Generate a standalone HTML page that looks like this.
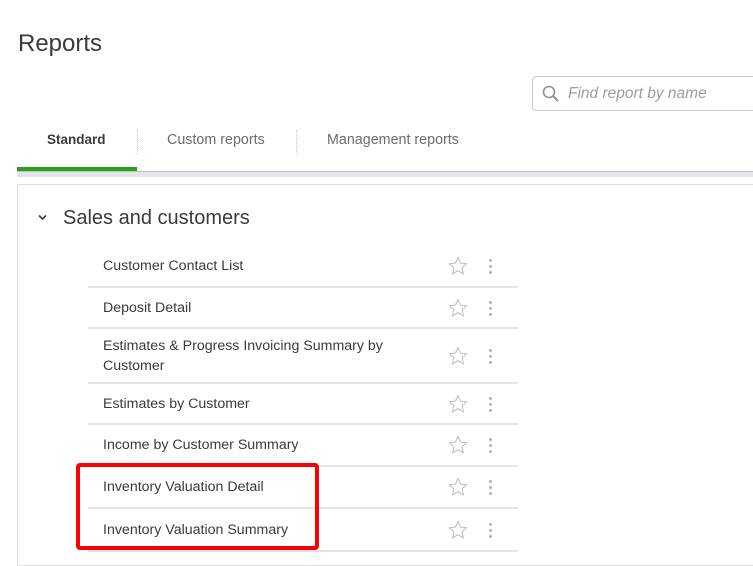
<!DOCTYPE html>
<html><head><style>
body{margin:0;width:753px;height:554px;overflow:hidden;background:#fff;font-family:"Liberation Sans",sans-serif;position:relative;color:#393a3d}
.a{position:absolute}
h1{position:absolute;left:18px;top:30px;margin:0;font-weight:normal;font-size:24px;color:#393a3d}
.search{left:532px;top:76px;width:240px;height:35px;border:1px solid #c8c9cc;border-radius:4px;box-sizing:border-box}
.search span{position:absolute;left:35px;top:8px;font-style:italic;color:#9a9ca0;font-size:15.5px}
.tab{top:132px;font-size:14.3px;color:#6b6c72}
.sep{top:130px;height:24px;border-left:1px dotted #c8c9cc}
.row{left:88px;width:430px;border-bottom:2px solid #e3e4e8;box-sizing:border-box}
.row .t{position:absolute;left:15px;font-size:14.2px;color:#393a3d;line-height:20px}
.row svg{position:absolute;left:360px}
.dots{position:absolute;left:401px;width:3px}
.dots i{display:block;width:3px;height:3px;border-radius:50%;background:#b0b2b6;margin-bottom:3px}
</style></head><body>
<h1>Reports</h1>
<div class="a search">
<svg class="a" style="left:9px;top:8px" width="18" height="18" viewBox="0 0 18 18"><circle cx="7" cy="7" r="5.5" fill="none" stroke="#8d9096" stroke-width="1.6"/><path d="M11 11l5 5" stroke="#8d9096" stroke-width="2"/></svg>
<span>Find report by name</span></div>
<div class="a tab" style="left:47px;color:#393a3d;font-weight:bold;font-size:13.5px">Standard</div>
<div class="a sep" style="left:137px"></div>
<div class="a tab" style="left:167px">Custom reports</div>
<div class="a sep" style="left:296px"></div>
<div class="a tab" style="left:327px">Management reports</div>
<div class="a" style="left:17px;top:171px;width:736px;height:5px;background:#e4e5e8;border-top:1px solid #babec5"></div>
<div class="a" style="left:17px;top:167px;width:120px;height:4px;background:#2ca01c"></div>
<div class="a" style="left:17px;top:184px;width:740px;height:380px;border:1px solid #dcdde0"></div>
<svg class="a" style="left:37px;top:213px" width="11" height="9" viewBox="0 0 11 9"><path d="M2 2.5l3.5 3.5 3.5-3.5" fill="none" stroke="#393a3d" stroke-width="1.6"/></svg>
<div class="a" style="left:63px;top:207px;font-size:20px">Sales and customers</div>
<div id="rows"></div>
<div class="a" style="left:76px;top:463px;width:243px;height:87px;border:4px solid #f70007;border-radius:4px;box-sizing:border-box"></div>
<script>
var r=[["Customer Contact List",245,43],["Deposit Detail",288,41],["Estimates &amp; Progress Invoicing Summary by<br>Customer",329,55],["Estimates by Customer",384,41],["Income by Customer Summary",425,42],["Inventory Valuation Detail",467,42],["Inventory Valuation Summary",509,43]];
var h="";r.forEach(function(x){var c=x[2]/2-1;var th=x[0].indexOf("<br>")>0?40:20;
h+='<div class="a row" style="top:'+x[1]+'px;height:'+x[2]+'px"><div class="t" style="top:'+(c-th/2)+'px">'+x[0]+'</div><svg style="top:'+(c-10)+'px" width="20" height="20" viewBox="0 0 20 20"><path d="M10 1.5l2.6 5.6 6 .6-4.5 4.1 1.3 6-5.4-3.1-5.4 3.1 1.3-6-4.5-4.1 6-.6z" fill="none" stroke="#b5b7bb" stroke-width="0.9"/></svg><div class="dots" style="top:'+(c-7)+'px"><i></i><i></i><i></i></div></div>';});
document.getElementById("rows").innerHTML=h;
</script>
</body></html>
